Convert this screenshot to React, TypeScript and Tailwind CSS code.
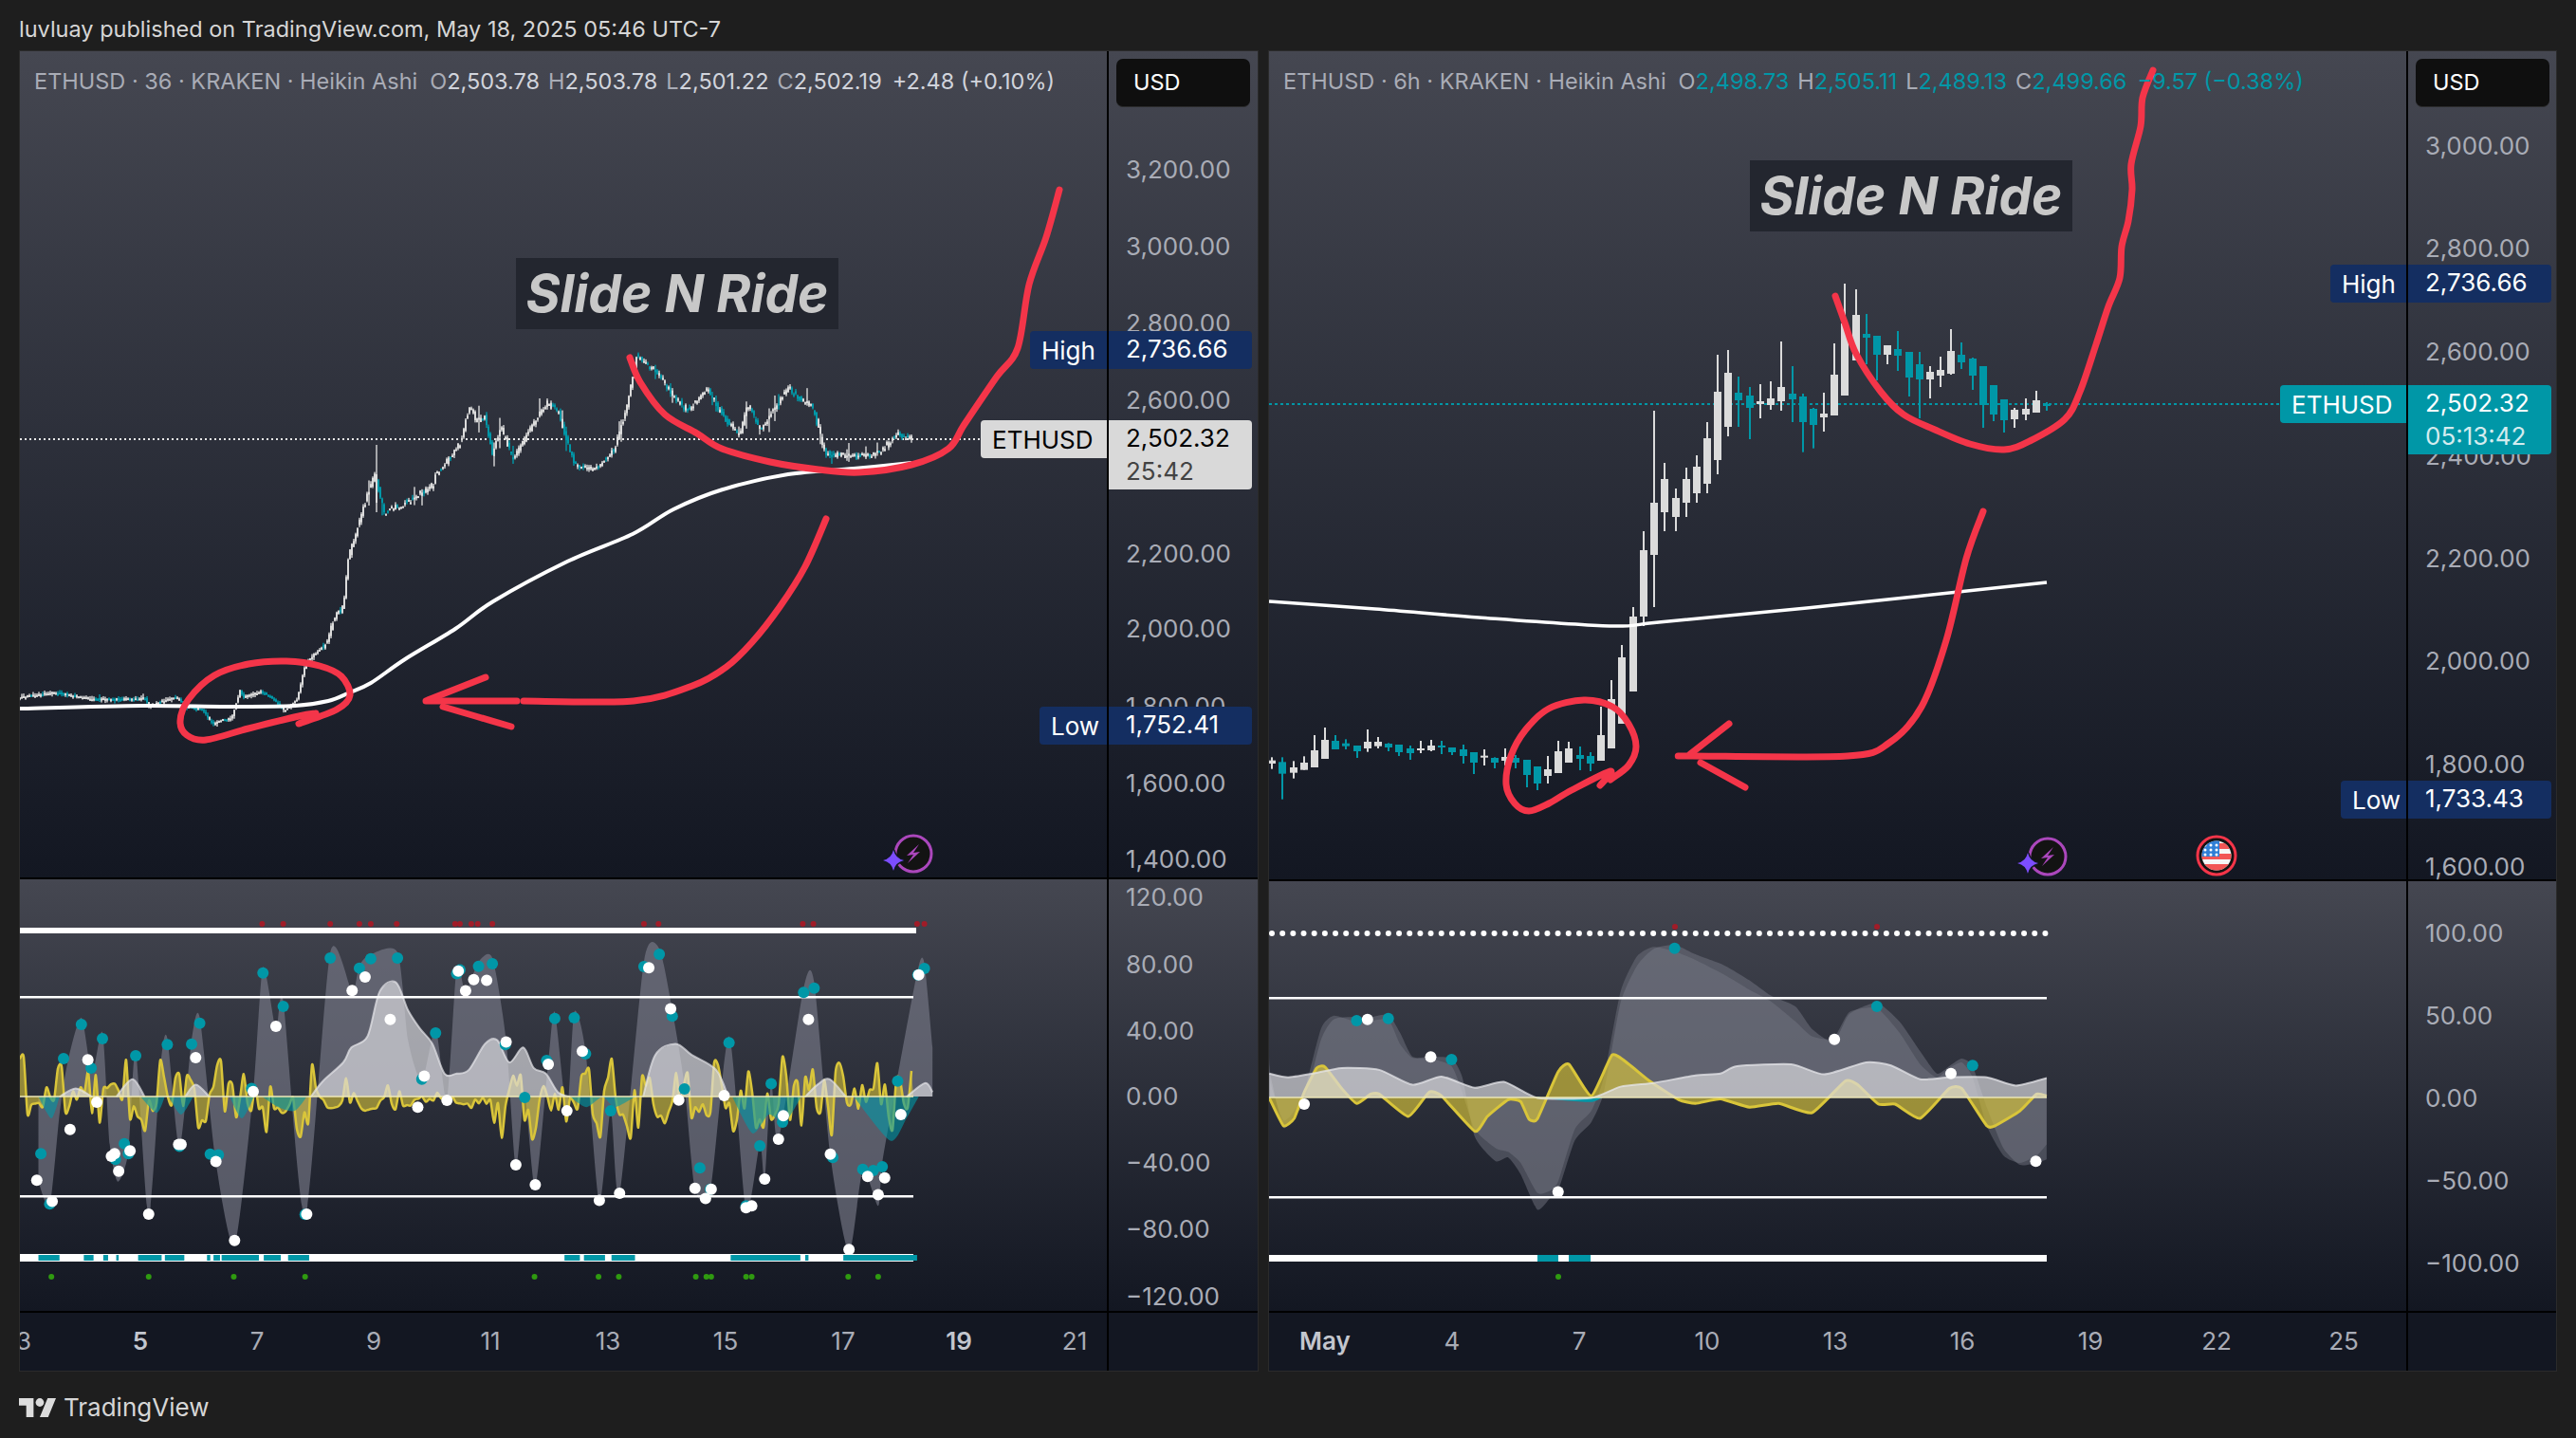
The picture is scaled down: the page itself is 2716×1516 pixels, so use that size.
import { ReactNode } from "react";

type Pt = [number, number];
type Candle = { x: number; wt: number; wb: number; bt: number; bb: number; up: boolean };

const TEAL = "#0097a7";
const CANDLE_UP = "#dbdbdb";
const RED = "#f43549";

// small seeded random so the noise in the picture stays the same on every load
const seeded = (seed: number) => () => {
  seed = (seed + 0x6d2b79f5) | 0;
  let t = Math.imul(seed ^ (seed >>> 15), 1 | seed);
  t = (t + Math.imul(t ^ (t >>> 7), 61 | t)) ^ t;
  return ((t ^ (t >>> 14)) >>> 0) / 4294967296;
};

// catmull-rom through the points
const curve = (pts: Pt[], k = 0.16) => {
  let d = `M${pts[0][0].toFixed(1)},${pts[0][1].toFixed(1)}`;
  for (let i = 0; i < pts.length - 1; i++) {
    const p0 = pts[i - 1] || pts[i];
    const p1 = pts[i];
    const p2 = pts[i + 1];
    const p3 = pts[i + 2] || p2;
    const c1x = p1[0] + (p2[0] - p0[0]) * k;
    const c1y = p1[1] + (p2[1] - p0[1]) * k;
    const c2x = p2[0] - (p3[0] - p1[0]) * k;
    const c2y = p2[1] - (p3[1] - p1[1]) * k;
    d += `C${c1x.toFixed(1)},${c1y.toFixed(1)} ${c2x.toFixed(1)},${c2y.toFixed(1)} ${p2[0].toFixed(1)},${p2[1].toFixed(1)}`;
  }
  return d;
};

const area = (pts: Pt[], base: number, k = 0.12) =>
  `${curve(pts, k)}L${pts[pts.length - 1][0]},${base}L${pts[0][0]},${base}Z`;

const Ink = ({ pts, k }: { pts: Pt[]; k?: number }) => (
  <path d={curve(pts, k)} fill="none" stroke={RED} strokeWidth={7} strokeLinecap="round" strokeLinejoin="round" />
);

const Candles = ({ data, w = 8, wick = 2 }: { data: Candle[]; w?: number; wick?: number }) => (
  <g>
    {data.map((c, i) => (
      <g key={i} fill={c.up ? CANDLE_UP : TEAL}>
        <rect x={c.x - wick / 2} y={c.wt} width={wick} height={Math.max(c.wb - c.wt, 1)} />
        <rect x={c.x - w / 2} y={c.bt} width={w} height={Math.max(c.bb - c.bt, 2)} />
      </g>
    ))}
  </g>
);

const BoltBadge = ({ x, y }: { x: number; y: number }) => (
  <g transform={`translate(${x},${y})`}>
    <circle r={19} fill="#131313" stroke="#ab47bc" strokeWidth={3} />
    <path d="M6,-10 L-7,2 L0,1 L-6,10 L7,-2 L0,-1 Z" fill="#ab47bc" />
    <path
      transform="translate(-21,7)"
      d="M0,-11 Q2,-2 11,0 Q2,2 0,11 Q-2,2 -11,0 Q-2,-2 0,-11Z"
      fill="#7c4dff"
      stroke="#131722"
      strokeWidth={3}
      paintOrder="stroke"
    />
  </g>
);

const FlagBadge = ({ x, y }: { x: number; y: number }) => (
  <g transform={`translate(${x},${y})`}>
    <circle r={20} fill="#131313" stroke={RED} strokeWidth={3} />
    <clipPath id="flag-clip">
      <circle r={15.5} />
    </clipPath>
    <g clipPath="url(#flag-clip)">
      <rect x={-16} y={-16} width={32} height={32} fill="#f6f6f6" />
      <rect x={-16} y={-13} width={32} height={6} fill="#f25555" />
      <rect x={-16} y={-2} width={32} height={6} fill="#f25555" />
      <rect x={-16} y={9} width={32} height={7} fill="#f25555" />
      <rect x={-16} y={-16} width={19} height={17} fill="#2f7fd6" />
      {[-12, -6, 0].map(sx =>
        [-11, -6, -1].map(sy => <circle key={`${sx}${sy}`} cx={sx} cy={sy} r={1.5} fill="#ffffff" />)
      )}
    </g>
  </g>
);

/* ---------- left chart, 36m ---------- */

const leftPrice: Pt[] = [
  [21, 735], [60, 730], [100, 737], [150, 737], [154, 735], [159, 744], [177, 738], [188, 735], [199, 745],
  [215, 748], [226, 763], [239, 758], [246, 758], [255, 728], [259, 735], [277, 729], [288, 735], [302, 749],
  [315, 738], [324, 700], [333, 690], [346, 678], [355, 650], [364, 640], [369, 589], [390, 520], [397, 500],
  [407, 540], [433, 528], [459, 511], [461, 500], [479, 480], [487, 467], [497, 428], [504, 443], [513, 440],
  [521, 478], [530, 450], [543, 485], [564, 447], [579, 425], [590, 433], [608, 490], [630, 495], [650, 473],
  [662, 433], [673, 375], [684, 385], [697, 395], [709, 413], [726, 433], [748, 410], [765, 440], [782, 460],
  [790, 425], [803, 453], [833, 410], [859, 430], [872, 478], [906, 482], [927, 478], [949, 458], [961, 462],
];

const thinBars = (path: Pt[]): Candle[] => {
  const rnd = seeded(36);
  const out: Candle[] = [];
  const yAt = (x: number) => {
    for (let i = 0; i < path.length - 1; i++) {
      if (x <= path[i + 1][0]) {
        const t = (x - path[i][0]) / (path[i + 1][0] - path[i][0]);
        return path[i][1] + (path[i + 1][1] - path[i][1]) * t;
      }
    }
    return path[path.length - 1][1];
  };
  for (let x = 21; x <= 961; x += 2) {
    const calm = x < 340 ? 0.3 : 1;
    const a = yAt(x) + (rnd() - 0.5) * 6 * calm;
    const b = yAt(x + 2) + (rnd() - 0.5) * 6 * calm;
    const spike = rnd() > 0.9 ? 14 * calm : 3;
    out.push({
      x,
      bt: Math.min(a, b),
      bb: Math.max(a, b),
      wt: Math.min(a, b) - rnd() * spike,
      wb: Math.max(a, b) + rnd() * spike,
      up: b < a || rnd() > 0.72,
    });
  }
  out.push({ x: 397, bt: 500, bb: 530, wt: 469, wb: 540, up: true });
  return out;
};

const leftBars = thinBars(leftPrice);

const leftMa: Pt[] = [
  [21, 747], [150, 744], [239, 745], [311, 744], [346, 739], [369, 730], [391, 720], [427, 695], [480, 663],
  [520, 634], [598, 592], [667, 563], [710, 537], [762, 516], [831, 500], [900, 494], [961, 488],
];

const LeftDrawing = () => (
  <>
    <line x1={21} x2={1033} y1={463} y2={463} stroke="#e8e8e8" strokeWidth={2} strokeDasharray="2 3" />
    <Candles data={leftBars} w={2} wick={1.4} />
    <path d={curve(leftMa)} fill="none" stroke="#ffffff" strokeWidth={4} />
    <Ink
      pts={[
        [664, 377], [675, 403], [701, 437], [735, 457], [761, 473], [812, 487], [863, 495], [906, 498], [961, 490],
        [1000, 473], [1017, 447], [1051, 397], [1073, 367], [1085, 300], [1103, 250], [1117, 200],
      ]}
    />
    <Ink pts={[[871, 547], [849, 597], [822, 640], [793, 677], [766, 703], [730, 723], [668, 739], [552, 739]]} />
    <Ink pts={[[545, 739], [449, 739]]} />
    <Ink pts={[[512, 714], [451, 738]]} />
    <Ink pts={[[467, 745], [539, 766]]} />
    <Ink
      pts={[
        [333, 752], [315, 755], [262, 768], [217, 780], [197, 775], [190, 760], [199, 737], [226, 712], [262, 700],
        [302, 697], [337, 702], [360, 713], [369, 733], [355, 748], [315, 763],
      ]}
    />
    <BoltBadge x={963} y={900} />
  </>
);

/* ---------- left oscillator, sampled in a 1568-wide crop, mapped back below ---------- */

const lx = (z: number) => 20 + z / 1.1701;
const ly = (z: number) => 900 + z / 2.545;
const toLeft = (rows: number[][]): Pt[] => rows.map(([a, b]) => [lx(a), ly(b)]);

const leftGray = toLeft([
  [24, 880], [38, 945], [50, 700], [60, 560], [77, 440], [90, 590], [103, 480], [112, 780], [122, 880], [135, 800],
  [144, 530], [160, 975], [175, 560], [183, 495], [198, 790], [213, 500], [223, 440], [243, 830], [266, 1050],
  [289, 640], [301, 305], [317, 470], [326, 395], [353, 975], [384, 265], [411, 370], [420, 300], [434, 270],
  [467, 265], [480, 500], [497, 610], [514, 470], [528, 660], [540, 305], [551, 370], [567, 290], [584, 280],
  [601, 500], [613, 840], [624, 650], [637, 895], [653, 560], [661, 425], [676, 690], [685, 425], [699, 530],
  [716, 935], [730, 690], [741, 915], [771, 290], [790, 255], [806, 420], [821, 620], [834, 900], [853, 905],
  [876, 490], [897, 955], [914, 780], [920, 880], [928, 610], [937, 770], [968, 360], [981, 345], [1001, 810],
  [1024, 1070], [1041, 850], [1060, 945], [1065, 830], [1084, 600], [1109, 310], [1117, 295], [1127, 520],
]);

const leftLight = [
  [[50, 652], [70, 630], [90, 652]],
  [[120, 652], [140, 605], [155, 652]],
  [[205, 652], [218, 620], [235, 652]],
  [[360, 652], [375, 610], [400, 560], [410, 520], [430, 490], [445, 370], [465, 345], [480, 420], [495, 470], [510, 510],
    [525, 590], [540, 590], [555, 580], [575, 510], [590, 500], [605, 560], [622, 520], [635, 575], [650, 590], [665, 640], [680, 652]],
  [[770, 652], [785, 540], [810, 510], [830, 540], [860, 580], [875, 652]],
  [[970, 652], [985, 620], [1000, 605], [1020, 652]],
  [[1095, 652], [1118, 615], [1127, 640]],
].map(toLeft);

const leftTeal = [
  [[24, 652], [40, 710], [50, 652]],
  [[150, 652], [170, 695], [180, 652]],
  [[185, 652], [200, 700], [215, 652]],
  [[260, 652], [275, 710], [290, 652]],
  [[300, 652], [320, 680], [340, 690], [355, 652]],
  [[680, 652], [700, 680], [720, 652], [735, 680], [760, 652]],
  [[880, 652], [905, 750], [925, 700], [945, 720], [965, 652]],
  [[1030, 652], [1075, 770], [1095, 710], [1110, 652]],
].map(toLeft);

const leftYellow: Pt[] = (() => {
  const rnd = seeded(7);
  const pts: Pt[] = [];
  for (let x = 21; x <= 963; x += 4) {
    const quiet = x > 333 && x < 520;
    const swing = (rnd() - 0.5) * (quiet ? 12 : 64) + Math.sin(x / 5.5) * (quiet ? 4 : 14);
    const spike = quiet && rnd() > 0.85 ? -18 : 0;
    pts.push([x, 1156 + (quiet ? 6 : 0) + swing + spike]);
  }
  return pts;
})();

const leftTealDots = toLeft([
  [27, 805], [38, 940], [55, 550], [77, 458], [89, 575], [103, 496], [119, 820], [130, 778], [135, 805], [144, 542],
  [183, 512], [198, 785], [213, 511], [223, 455], [236, 806], [246, 808], [287, 630], [301, 320], [326, 410], [353, 968],
  [384, 280], [420, 307], [434, 282], [467, 280], [497, 605], [514, 481], [540, 322], [544, 312], [567, 302], [584, 295],
  [600, 512], [624, 654], [651, 555], [661, 442], [685, 440], [699, 537], [730, 690], [771, 303], [790, 270], [806, 436],
  [821, 631], [840, 843], [853, 900], [876, 507], [897, 945], [914, 784], [928, 617], [942, 720], [968, 372], [981, 361],
  [1004, 815], [1041, 847], [1054, 850], [1065, 840], [1084, 610], [1109, 325], [1117, 308],
]);

const leftWhiteDots = toLeft([
  [22, 876], [41, 933], [63, 740], [85, 553], [96, 667], [114, 812], [123, 852], [118, 805], [137, 797], [160, 967],
  [197, 780], [200, 780], [218, 547], [243, 826], [266, 1038], [289, 638], [317, 463], [355, 967], [411, 367], [427, 331],
  [458, 445], [492, 680], [500, 597], [528, 662], [542, 315], [551, 368], [561, 338], [577, 340], [601, 505], [613, 835],
  [637, 888], [653, 565], [676, 690], [695, 530], [716, 930], [741, 911], [777, 306], [804, 416], [814, 661], [834, 898],
  [847, 925], [854, 900], [870, 649], [897, 950], [904, 945], [920, 873], [937, 766], [943, 703], [974, 445], [1001, 806],
  [1024, 1062], [1047, 866], [1060, 915], [1068, 870], [1088, 700], [1110, 325],
]);

const leftBandTeal = [
  [24, 50], [80, 92], [104, 110], [120, 123], [147, 176], [180, 204], [232, 236], [240, 248], [250, 296], [302, 323],
  [332, 358], [673, 692], [697, 723], [731, 760], [878, 964], [970, 974], [1017, 1108],
];
const leftRedDots = [300, 326, 384, 420, 434, 466, 538, 544, 558, 566, 584, 771, 789, 967, 980, 1108, 1117];
const leftGreenDots = [40, 160, 265, 353, 636, 715, 740, 835, 848, 854, 897, 904, 1023, 1060];

const LeftOscillator = () => (
  <>
    {leftRedDots.map(z => <circle key={z} cx={lx(z)} cy={974} r={3} fill="#a01c28" />)}
    <rect x={21} y={978} width={945} height={6} fill="#ffffff" />
    <path d={area(leftGray, 1156)} fill="#7b7d8a" fillOpacity={0.62} />
    <path d={`M21,1156 ${curve(leftYellow, 0.12).slice(1).replace(/^/, "L")}L963,1156Z`} fill="#d9c53a" fillOpacity={0.6} />
    <path d={curve(leftYellow, 0.12)} fill="none" stroke="#d9c53a" strokeWidth={2.5} />
    {leftTeal.map((t, i) => <path key={i} d={area(t, 1156)} fill={TEAL} fillOpacity={0.6} />)}
    {leftLight.map((t, i) => (
      <g key={i}>
        <path d={area(t, 1156)} fill="#dcdce0" fillOpacity={0.68} />
        <path d={curve(t)} fill="none" stroke="#e6e6ea" strokeOpacity={0.7} strokeWidth={2} />
      </g>
    ))}
    <line x1={21} x2={963} y1={1156} y2={1156} stroke="#efeab8" strokeOpacity={0.75} strokeWidth={2} />
    <rect x={21} y={1050} width={942} height={2.5} fill="#ffffff" />
    <rect x={21} y={1260} width={942} height={2.5} fill="#ffffff" />
    {leftTealDots.map(([x, y], i) => <circle key={i} cx={x} cy={y} r={6} fill={TEAL} />)}
    {leftWhiteDots.map(([x, y], i) => <circle key={i} cx={x} cy={y} r={6} fill="#ffffff" />)}
    <rect x={21} y={1322} width={942} height={8} fill="#ffffff" />
    {leftBandTeal.map(([a, b]) => <rect key={a} x={lx(a)} y={1323} width={(b - a) / 1.1701} height={6} fill={TEAL} />)}
    {leftGreenDots.map(z => <circle key={z} cx={lx(z)} cy={1346} r={3} fill="#2f9a10" />)}
  </>
);

/* ---------- right chart, 6h ---------- */

const rows = (x0: number, y0: number, list: (number | string)[][]): Candle[] =>
  list.map(r => ({
    x: x0 + (r[0] as number) / 3,
    wt: y0 + (r[1] as number) / 3,
    wb: y0 + (r[2] as number) / 3,
    bt: y0 + (r[3] as number) / 3,
    bb: y0 + (r[4] as number) / 3,
    up: r[5] === "w",
  }));

const rightCandles: Candle[] = [
  ...rows(1340, 700, [
    [3, 295, 332, 305, 315, "w"], [36, 295, 428, 310, 347, "t"], [72, 307, 362, 327, 344, "w"], [105, 292, 335, 312, 335, "w"],
    [138, 225, 327, 273, 327, "w"], [171, 201, 300, 240, 300, "w"], [204, 225, 270, 243, 270, "t"], [237, 238, 270, 251, 260, "t"],
    [273, 258, 297, 258, 276, "t"], [306, 207, 278, 246, 267, "w"], [339, 231, 267, 246, 260, "w"], [372, 250, 276, 252, 264, "t"],
    [405, 255, 291, 255, 279, "t"], [441, 258, 303, 267, 282, "t"], [474, 243, 282, 267, 273, "w"], [507, 240, 276, 258, 273, "w"],
    [540, 243, 285, 258, 264, "t"], [573, 264, 288, 264, 279, "t"], [609, 255, 315, 270, 291, "t"], [642, 279, 348, 279, 312, "t"],
    [675, 270, 321, 290, 296, "w"], [708, 295, 330, 297, 312, "t"], [741, 267, 321, 294, 306, "w"], [774, 288, 330, 297, 312, "t"],
    [810, 303, 390, 303, 351, "t"], [843, 324, 399, 324, 378, "t"], [876, 291, 378, 333, 354, "w"], [909, 243, 345, 276, 345, "w"],
    [942, 246, 312, 267, 312, "w"], [978, 261, 336, 288, 300, "t"], [1011, 279, 339, 291, 315, "t"], [1044, 135, 306, 225, 306, "w"],
    [1077, 51, 267, 111, 267, "w"],
  ]),
  ...[
    [1710, 680, 763, 693, 763, "w"], [1722, 640, 729, 650, 729, "w"], [1733, 560, 660, 580, 650, "w"], [1744, 433, 640, 530, 585, "w"],
    [1755, 488, 560, 505, 540, "w"], [1767, 515, 560, 525, 545, "w"], [1778, 493, 545, 505, 530, "w"], [1789, 480, 530, 492, 520, "w"],
    [1800, 445, 520, 462, 510, "w"], [1811, 374, 500, 413, 485, "w"], [1822, 369, 460, 393, 450, "w"], [1833, 397, 450, 414, 422, "t"],
    [1845, 408, 463, 417, 430, "t"], [1856, 405, 441, 423, 426, "w"], [1867, 402, 432, 420, 427, "w"], [1878, 360, 433, 408, 423, "w"],
    [1890, 386, 445, 415, 421, "t"],
  ].map(r => ({ x: r[0] as number, wt: r[1] as number, wb: r[2] as number, bt: r[3] as number, bb: r[4] as number, up: r[5] === "w" })),
  ...rows(1900, 290, [
    [3, 375, 560, 384, 465, "t"], [36, 420, 548, 423, 474, "t"], [69, 372, 495, 438, 450, "w"], [102, 216, 444, 315, 444, "w"],
    [135, 27, 381, 153, 381, "w"], [171, 45, 270, 126, 270, "w"], [204, 123, 282, 186, 198, "t"], [237, 192, 333, 192, 252, "t"],
    [270, 222, 282, 222, 252, "w"], [303, 177, 303, 234, 255, "t"], [339, 243, 384, 243, 324, "t"], [372, 243, 453, 282, 330, "t"],
    [405, 288, 390, 306, 330, "w"], [438, 258, 354, 300, 318, "w"], [471, 171, 315, 240, 312, "w"], [504, 213, 297, 252, 276, "t"],
    [540, 261, 363, 264, 318, "t"], [573, 288, 483, 288, 411, "t"], [606, 348, 462, 348, 441, "t"], [639, 393, 498, 393, 459, "t"],
    [672, 420, 483, 426, 456, "w"], [708, 390, 459, 423, 441, "w"], [741, 366, 435, 396, 435, "w"], [774, 402, 429, 408, 411, "t"],
  ]),
];

const rightMa: Pt[] = [[1338, 634], [1450, 642], [1559, 651], [1697, 660], [1749, 656], [1905, 641], [2158, 614]];

const RightDrawing = () => (
  <>
    <line x1={1338} x2={2403} y1={426} y2={426} stroke={TEAL} strokeWidth={2} strokeDasharray="3 3" />
    <Candles data={rightCandles} />
    <path d={curve(rightMa)} fill="none" stroke="#ffffff" strokeWidth={3.5} />
    <Ink
      pts={[
        [1935, 312], [1945, 340], [1957, 373], [1983, 413], [2007, 437], [2040, 453], [2077, 468], [2113, 474], [2140, 465],
        [2177, 442], [2193, 413], [2210, 363], [2223, 323], [2235, 293], [2237, 260], [2244, 233], [2248, 200], [2247, 173],
        [2257, 133], [2259, 103], [2270, 74],
      ]}
    />
    <Ink pts={[[2091, 539], [2073, 589], [2052, 675], [2026, 745], [1992, 783], [1948, 797], [1784, 797], [1775, 797]]} />
    <Ink pts={[[1823, 763], [1782, 795]]} />
    <Ink pts={[[1793, 804], [1840, 830]]} />
    <Ink
      pts={[
        [1687, 828], [1698, 813], [1657, 833], [1633, 847], [1612, 855], [1597, 847], [1588, 827], [1593, 797], [1608, 770],
        [1633, 747], [1670, 738], [1700, 745], [1717, 763], [1725, 787], [1717, 807], [1698, 822],
      ]}
    />
    <BoltBadge x={2159} y={903} />
    <FlagBadge x={2337} y={902} />
  </>
);

const rx = (z: number) => 1340 + z / 1.1395;
const toRight = (list: number[][]): Pt[] => list.map(([a, b]) => [rx(a), ly(b)]);

const rightGray = toRight([
  [-2, 545], [0, 600], [15, 735], [28, 700], [40, 670], [60, 500], [75, 445], [100, 438], [116, 440], [141, 432], [155, 480],
  [170, 545], [192, 545], [217, 550], [230, 600], [245, 760], [270, 825], [285, 815], [300, 860], [320, 955], [335, 925],
  [345, 905], [365, 770], [385, 720], [400, 640], [420, 400], [440, 300], [460, 255], [485, 245], [510, 270], [545, 300],
  [575, 340], [600, 380], [630, 410], [650, 470], [676, 505], [695, 430], [728, 400], [755, 450], [780, 530], [800, 590],
  [815, 570], [830, 550], [843, 570], [860, 680], [880, 790], [900, 835], [920, 830], [932, 820],
]);
const rightGray2 = toRight([
  [-2, 560], [0, 620], [15, 715], [28, 690], [40, 640], [60, 470], [75, 435], [100, 450], [116, 450], [141, 445], [155, 510],
  [170, 548], [192, 550], [217, 570], [230, 640], [245, 740], [270, 790], [285, 800], [300, 830], [320, 910], [335, 905],
  [345, 880], [365, 740], [385, 690], [400, 600], [420, 370], [440, 275], [460, 250], [485, 262], [510, 285], [545, 325],
  [575, 365], [600, 395], [630, 450], [650, 490], [676, 495], [695, 425], [728, 415], [755, 480], [780, 565], [800, 600],
  [815, 575], [830, 560], [843, 600], [860, 730], [880, 810], [900, 830], [920, 810], [932, 780],
]);
const rightLight = toRight([
  [-2, 590], [20, 600], [50, 590], [85, 575], [130, 580], [170, 620], [205, 598], [245, 628], [280, 612], [320, 655],
  [385, 655], [420, 625], [460, 615], [510, 595], [540, 590], [560, 570], [625, 565], [665, 592], [715, 560], [745, 568],
  [780, 605], [815, 600], [860, 600], [895, 622], [932, 602],
]);
const rightYellow = toRight([
  [-2, 655], [15, 730], [28, 710], [40, 640], [55, 575], [65, 572], [85, 630], [103, 670], [120, 645], [130, 645], [165, 705],
  [190, 640], [205, 650], [245, 745], [260, 705], [285, 660], [300, 665], [310, 712], [320, 712], [345, 585], [358, 565],
  [385, 650], [410, 540], [430, 565], [455, 610], [490, 660], [510, 670], [540, 658], [575, 680], [610, 670], [650, 695],
  [690, 610], [705, 620], [730, 672], [750, 672], [780, 710], [815, 630], [830, 630], [860, 730], [870, 730], [900, 690],
  [920, 645], [932, 650],
]);
const rightTealDots = toRight([[103, 448], [141, 442], [217, 552], [485, 254], [728, 410], [843, 568]]);
const rightWhiteDots = toRight([[40, 672], [116, 445], [192, 545], [345, 907], [677, 498], [817, 590], [919, 825]]);
const topDots = Array.from({ length: 74 }, (_, i) => 1341 + i * 11.17);

const RightOscillator = () => (
  <>
    <circle cx={1766} cy={977} r={3} fill="#a01c28" />
    <circle cx={1979} cy={977} r={3} fill="#a01c28" />
    {topDots.map(x => <circle key={x} cx={x} cy={984} r={3} fill="#ffffff" />)}
    <path d={area(rightGray, 1157, 0.1)} fill="#7b7d8a" fillOpacity={0.45} />
    <path d={area(rightGray2, 1157, 0.1)} fill="#7b7d8a" fillOpacity={0.4} />
    <path d={area(rightYellow, 1157, 0.08)} fill="#d9c53a" fillOpacity={0.65} />
    <path d={curve(rightYellow, 0.08)} fill="none" stroke="#d9c53a" strokeWidth={3} />
    <path d={area(toRight([[320, 652], [350, 662], [385, 666], [400, 652]]), 1157)} fill={TEAL} />
    <path d={area(rightLight, 1157, 0.1)} fill="#dcdce0" fillOpacity={0.68} />
    <path d={curve(rightLight, 0.1)} fill="none" stroke="#e6e6ea" strokeOpacity={0.75} strokeWidth={2} />
    <line x1={1338} x2={2158} y1={1157} y2={1157} stroke="#efeab8" strokeOpacity={0.7} strokeWidth={2} />
    <rect x={1338} y={1051} width={820} height={2.5} fill="#ffffff" />
    <rect x={1338} y={1261} width={820} height={2.5} fill="#ffffff" />
    {rightTealDots.map(([x, y], i) => <circle key={i} cx={x} cy={y} r={6} fill={TEAL} />)}
    {rightWhiteDots.map(([x, y], i) => <circle key={i} cx={x} cy={y} r={6} fill="#ffffff" />)}
    <rect x={1338} y={1323} width={820} height={7} fill="#ffffff" />
    <rect x={1621} y={1323} width={22} height={7} fill={TEAL} />
    <rect x={1654} y={1323} width={23} height={7} fill={TEAL} />
    <circle cx={1643} cy={1346} r={3} fill="#2f9a10" />
  </>
);

/* ---------- chart chrome ---------- */

type Tag = {
  label: string;
  price: string;
  extra?: string;
  y: number;
  labelW: number;
  tone: "blue" | "light" | "teal";
};

const tagTone = {
  blue: { box: "bg-[#142e61] text-white", extra: "" },
  light: { box: "bg-[#d9d9d9] text-black", extra: "text-[#434343]" },
  teal: { box: "bg-[#0097a7] text-white", extra: "text-[#d3ecef]" },
};

type ChartConfig = {
  originX: number;
  plotW: number;
  axisW: number;
  mainH: number;
  subH: number;
  legend: { title: string; vals: [string, string][]; change: string; valueClass: string };
  banner: { x: number; y: number };
  mainTicks: [string, number][];
  subTicks: [string, number][];
  timeTicks: [string, number, boolean?][];
  tags: Tag[];
  main: ReactNode;
  sub: ReactNode;
};

const PANE_TOP = 54;

const Chart = ({ cfg }: { cfg: ChartConfig }) => {
  const subTop = PANE_TOP + cfg.mainH + 2;
  return (
    <div className="flex flex-col border border-[#2b2b2b] h-[1393px]" style={{ width: cfg.plotW + cfg.axisW + 2 }}>
      <div className="flex border-b-2 border-black bg-linear-to-b from-[#454751] to-[#131722]" style={{ height: cfg.mainH + 2 }}>
        <div className="relative overflow-hidden" style={{ width: cfg.plotW }}>
          <svg
            className="absolute inset-0"
            width={cfg.plotW}
            height={cfg.mainH}
            viewBox={`${cfg.originX} ${PANE_TOP} ${cfg.plotW} ${cfg.mainH}`}
          >
            {cfg.main}
          </svg>
          <div className="absolute left-[15px] top-[17px] flex gap-[12px] text-[23.5px] leading-[30px] text-[#a9acb6] whitespace-nowrap">
            <span>{cfg.legend.title}</span>
            <span className="flex gap-[9px] ml-[1px]">
              {cfg.legend.vals.map(([k, v]) => (
                <span key={k}>
                  {k}
                  <span className={cfg.legend.valueClass}>{v}</span>
                </span>
              ))}
              <span className={`ml-[2px] ${cfg.legend.valueClass}`}>{cfg.legend.change}</span>
            </span>
          </div>
          <div
            className="absolute h-[75px] w-[340px] flex items-center justify-center bg-[#23262f] text-[#c8c8c8] text-[55px] font-bold italic leading-none whitespace-nowrap"
            style={{ left: cfg.banner.x - cfg.originX, top: cfg.banner.y - PANE_TOP }}
          >
            Slide N Ride
          </div>
          {cfg.tags.map(t => (
            <div
              key={t.label}
              className={`absolute right-0 h-[40px] flex items-center pl-[12px] rounded-l-[4px] text-[26px] ${tagTone[t.tone].box}`}
              style={{ top: t.y - PANE_TOP, width: t.labelW }}
            >
              {t.label}
            </div>
          ))}
        </div>
        <div className="relative border-l-2 border-black" style={{ width: cfg.axisW }}>
          <div className="absolute left-[8px] top-[8px] w-[141px] h-[51px] rounded-[7px] bg-[#0f0f0f] border-b border-[#2b2b2b] flex items-center pl-[18px] text-[23.5px] text-white">
            USD
          </div>
          {cfg.mainTicks.map(([label, y]) => (
            <span
              key={label}
              className="absolute left-[18px] -translate-y-1/2 text-[26px] leading-none text-[#a9acb6]"
              style={{ top: y - PANE_TOP }}
            >
              {label}
            </span>
          ))}
          {cfg.tags.map(t => (
            <div
              key={t.label}
              className={`absolute left-0 w-[151px] rounded-r-[4px] pl-[18px] text-[26px] ${t.extra ? "h-[73px]" : "h-[40px]"} ${tagTone[t.tone].box}`}
              style={{ top: t.y - PANE_TOP }}
            >
              <div className="h-[38px] leading-[38px]">{t.price}</div>
              {t.extra && <div className={`h-[33px] leading-[31px] ${tagTone[t.tone].extra}`}>{t.extra}</div>}
            </div>
          ))}
        </div>
      </div>
      <div className="flex border-b-2 border-black bg-linear-to-b from-[#454751] to-[#131722]" style={{ height: cfg.subH + 2 }}>
        <div className="relative overflow-hidden" style={{ width: cfg.plotW }}>
          <svg
            className="absolute inset-0"
            width={cfg.plotW}
            height={cfg.subH}
            viewBox={`${cfg.originX} ${subTop} ${cfg.plotW} ${cfg.subH}`}
          >
            {cfg.sub}
          </svg>
        </div>
        <div className="relative border-l-2 border-black" style={{ width: cfg.axisW }}>
          {cfg.subTicks.map(([label, y]) => (
            <span
              key={label}
              className="absolute left-[18px] -translate-y-1/2 text-[26px] leading-none text-[#a9acb6]"
              style={{ top: y - subTop }}
            >
              {label}
            </span>
          ))}
        </div>
      </div>
      <div className="flex flex-1 bg-[#131722]">
        <div className="relative overflow-hidden" style={{ width: cfg.plotW }}>
          {cfg.timeTicks.map(([label, x, strong]) => (
            <span
              key={label}
              className={`absolute top-[14px] -translate-x-1/2 text-[26px] leading-[32px] ${strong ? "font-semibold text-[#c3c6ce]" : "text-[#a9acb6]"}`}
              style={{ left: x - cfg.originX }}
            >
              {label}
            </span>
          ))}
        </div>
        <div className="border-l-2 border-black" style={{ width: cfg.axisW }} />
      </div>
    </div>
  );
};

const leftCfg: ChartConfig = {
  originX: 21,
  plotW: 1146,
  axisW: 159,
  mainH: 871,
  subH: 455,
  legend: {
    title: "ETHUSD · 36 · KRAKEN · Heikin Ashi",
    vals: [["O", "2,503.78"], ["H", "2,503.78"], ["L", "2,501.22"], ["C", "2,502.19"]],
    change: "+2.48 (+0.10%)",
    valueClass: "text-[#d1d4dc]",
  },
  banner: { x: 544, y: 272 },
  mainTicks: [
    ["3,200.00", 179], ["3,000.00", 260], ["2,800.00", 341], ["2,600.00", 422], ["2,200.00", 584], ["2,000.00", 663],
    ["1,800.00", 745], ["1,600.00", 826], ["1,400.00", 906],
  ],
  subTicks: [
    ["120.00", 946], ["80.00", 1017], ["40.00", 1087], ["0.00", 1156], ["−40.00", 1226], ["−80.00", 1296], ["−120.00", 1367],
  ],
  timeTicks: [
    ["3", 25], ["5", 148, true], ["7", 271], ["9", 394], ["11", 517], ["13", 641], ["15", 765], ["17", 889], ["19", 1011, true], ["21", 1133],
  ],
  tags: [
    { label: "High", price: "2,736.66", y: 349, labelW: 81, tone: "blue" },
    { label: "Low", price: "1,752.41", y: 745, labelW: 71, tone: "blue" },
    { label: "ETHUSD", price: "2,502.32", extra: "25:42", y: 443, labelW: 133, tone: "light" },
  ],
  main: <LeftDrawing />,
  sub: <LeftOscillator />,
};

const rightCfg: ChartConfig = {
  originX: 1338,
  plotW: 1199,
  axisW: 158,
  mainH: 873,
  subH: 453,
  legend: {
    title: "ETHUSD · 6h · KRAKEN · Heikin Ashi",
    vals: [["O", "2,498.73"], ["H", "2,505.11"], ["L", "2,489.13"], ["C", "2,499.66"]],
    change: "−9.57 (−0.38%)",
    valueClass: "text-[#0097a7]",
  },
  banner: { x: 1845, y: 169 },
  mainTicks: [
    ["3,000.00", 154], ["2,800.00", 262], ["2,600.00", 371], ["2,400.00", 481], ["2,200.00", 589], ["2,000.00", 697],
    ["1,800.00", 806], ["1,600.00", 914],
  ],
  subTicks: [["100.00", 984], ["50.00", 1071], ["0.00", 1158], ["−50.00", 1245], ["−100.00", 1332]],
  timeTicks: [
    ["May", 1397, true], ["4", 1531], ["7", 1665], ["10", 1800], ["13", 1935], ["16", 2069], ["19", 2204], ["22", 2337], ["25", 2471],
  ],
  tags: [
    { label: "High", price: "2,736.66", y: 279, labelW: 80, tone: "blue" },
    { label: "Low", price: "1,733.43", y: 823, labelW: 69, tone: "blue" },
    { label: "ETHUSD", price: "2,502.32", extra: "05:13:42", y: 406, labelW: 133, tone: "teal" },
  ],
  main: <RightDrawing />,
  sub: <RightOscillator />,
};

export default function App() {
  return (
    <div className="w-[2716px] h-[1516px] bg-[#1e1e1e] flex flex-col overflow-hidden font-['Inter',sans-serif]">
      <div className="h-[53px] pl-[20px] pt-[16px] text-[23.5px] leading-[30px] text-[#d6d6d6] whitespace-nowrap">
        luvluay published on TradingView.com, May 18, 2025 05:46 UTC-7
      </div>
      <div className="flex gap-[10px] pl-[20px]">
        <Chart cfg={leftCfg} />
        <Chart cfg={rightCfg} />
      </div>
      <div className="flex items-center gap-[8px] pl-[20px] pt-[22px]">
        <svg width={39} height={20} viewBox="0 4 35.5 18" fill="#dcdcdc">
          <path d="M14 22H7V11H0V4h14v18zM28 22h-8l7.5-18h8L28 22z" />
          <circle cx={20} cy={8} r={4} />
        </svg>
        <span className="text-[26px] leading-[32px] text-[#d6d6d6]">TradingView</span>
      </div>
    </div>
  );
}
